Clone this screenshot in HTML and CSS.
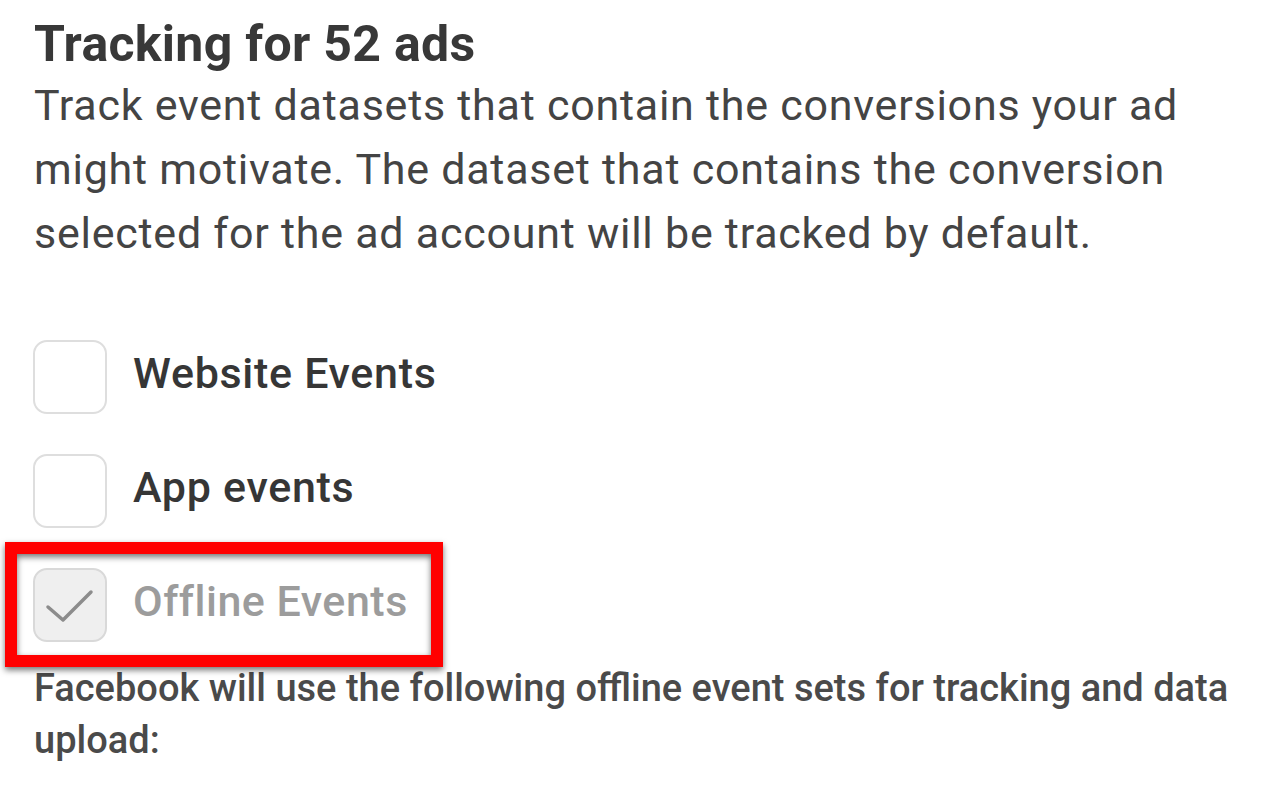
FILE: index.html
```html
<!DOCTYPE html>
<html>
<head>
<meta charset="utf-8">
<link rel="stylesheet" href="styles.css">
</head>
<body>
<div class="panel">
  <h1 class="title">Tracking for 52 ads</h1>
  <p class="desc">Track event datasets that contain the conversions your ad might motivate. The dataset that contains the conversion selected for the ad account will be tracked by default.</p>
  <ul class="options">
    <li class="option">
      <span class="box"></span>
      <span class="label">Website Events</span>
    </li>
    <li class="option">
      <span class="box"></span>
      <span class="label">App events</span>
    </li>
    <li class="option option-disabled">
      <span class="box box-checked">
        <svg class="check" viewBox="0 0 74 74" width="74" height="74"><path d="M15 39 L30 52 L58 24" fill="none" stroke="#8c8c8c" stroke-width="3.5" stroke-linecap="round" stroke-linejoin="round"/></svg>
      </span>
      <span class="label">Offline Events</span>
      <span class="highlight"></span>
    </li>
  </ul>
  <p class="note">Facebook will use the following offline event sets for tracking and data upload:</p>
</div>
</body>
</html>
```

FILE: styles.css
```css
html, body {
  margin: 0;
  padding: 0;
  background: #ffffff;
}

body {
  font-family: Roboto, "Liberation Sans", Arial, sans-serif;
  color: #3b3b3b;
}

.panel {
  padding: 15px 0 0 34px;
  width: 1200px;
}

.title {
  margin: 0;
  font-size: 50px;
  line-height: 58px;
  font-weight: 700;
  color: #383838;
  letter-spacing: 0.3px;
}

.desc {
  margin: 0;
  font-size: 43px;
  line-height: 64px;
  font-weight: 400;
  color: #444444;
  letter-spacing: 0.75px;
}

.options {
  list-style: none;
  margin: 75px 0 0 0;
  padding: 0;
  display: flex;
  flex-direction: column;
  gap: 40px;
}

.option {
  position: relative;
  display: flex;
  align-items: flex-start;
  gap: 26px;
  margin-left: -1px;
}

.box {
  box-sizing: border-box;
  width: 74px;
  height: 74px;
  flex: 0 0 74px;
  border: 2px solid #dedede;
  border-radius: 14px;
  background: #ffffff;
  position: relative;
}

.box-checked {
  background: #efefef;
  border-color: #d9d9d9;
}

.check {
  position: absolute;
  left: -2px;
  top: -2px;
}

.label {
  padding-top: 8px;
  font-size: 43px;
  line-height: 50px;
  font-weight: 500;
  color: #363636;
  letter-spacing: 0.7px;
}

.option-disabled .label {
  color: #9c9c9c;
  letter-spacing: 0.5px;
}

.highlight {
  position: absolute;
  left: -28px;
  top: -26px;
  width: 438px;
  height: 125px;
  box-sizing: border-box;
  border: 12px solid #ff0000;
  filter: drop-shadow(0 3px 3px rgba(0, 0, 0, 0.55));
  pointer-events: none;
}

.note {
  margin: 20px 0 0 0;
  font-size: 38px;
  line-height: 52px;
  font-weight: 500;
  color: #4a4a4a;
  letter-spacing: 0;
}
```
